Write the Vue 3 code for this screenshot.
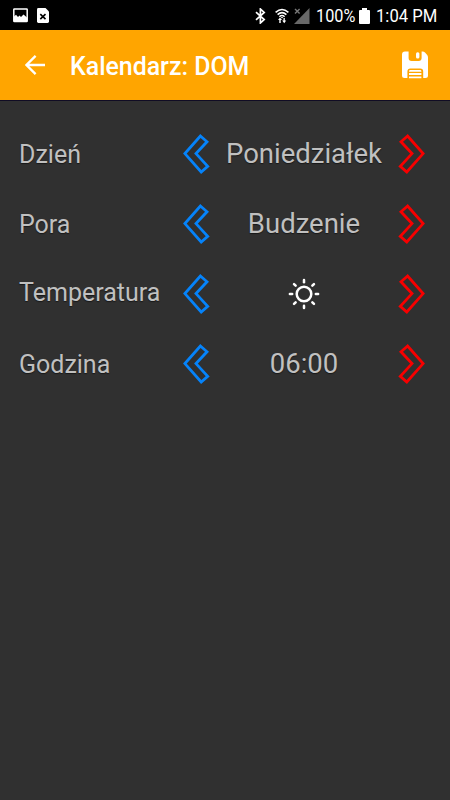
<script setup>
const rows = [
  { key: 'day', label: 'Dzień', value: 'Poniedziałek' },
  { key: 'period', label: 'Pora', value: 'Budzenie' },
  { key: 'temperature', label: 'Temperatura', icon: true },
  { key: 'hour', label: 'Godzina', value: '06:00' },
]
const rays = [0, 45, 90, 135, 180, 225, 270, 315]
</script>

<template>
  <div class="screen">
    <header class="status">
      <svg class="s-image" width="16" height="15" viewBox="0 0 16 15">
        <rect x="0.8" y="1" width="13.4" height="12.5" rx="0.6" fill="none" stroke="#fff" stroke-width="1.5" />
        <path d="M1 8.5 L3 6.8 L5 9 L6.5 7.5 L8 9 L10.5 6.5 L14 9.5 V13.5 H1Z" fill="#fff" />
      </svg>
      <svg class="s-file" width="12" height="15" viewBox="0 0 12 15">
        <path d="M1.4 0 H8.5 L12 3.5 V13.6 Q12 15 10.6 15 H1.4 Q0 15 0 13.6 V1.4 Q0 0 1.4 0Z" fill="#fff" />
        <path d="M3.3 6.2 L8.5 11.2 M8.5 6.2 L3.3 11.2" stroke="#000" stroke-width="1.6" />
      </svg>
      <span class="spacer"></span>
      <svg class="s-bt" width="11" height="16" viewBox="0 0 11 16">
        <path d="M1 4.2 L9.2 11.6 L5.4 15 V1 L9.2 4.4 L1 11.8" fill="none" stroke="#fff" stroke-width="1.7" />
      </svg>
      <svg class="s-wifi" width="14" height="16" viewBox="0 0 14 16">
        <g fill="none" stroke="#fff" stroke-width="1.5">
          <path d="M0.6 4.4 Q7 -1.4 13.4 4.4" />
          <path d="M2.6 6.6 Q7 2.6 11.4 6.6" />
          <path d="M4.4 8.7 Q7 6.3 9.6 8.7" />
        </g>
        <path d="M5.7 9 H8.3 L7 10.5Z M3 12 L5 9.6 L7 12 H5.7 V15 H4.3 V12Z M7.2 12.6 H8.5 V10 H9.8 V12.6 H11.2 L9.2 15.2Z" fill="#fff" />
      </svg>
      <svg class="s-signal" width="16" height="16" viewBox="0 0 16 16">
        <path d="M15.5 0 V16 H0Z" fill="#686868" />
        <path d="M1 1 L5.6 5.6 M5.6 1 L1 5.6" stroke="#777" stroke-width="1.4" />
      </svg>
      <span class="percent">100%</span>
      <svg class="s-battery" width="11" height="16" viewBox="0 0 11 16">
        <path d="M3 0 H8 V2 H10 Q11 2 11 3 V15 Q11 16 10 16 H1 Q0 16 0 15 V3 Q0 2 1 2 H3Z" fill="#fff" />
      </svg>
      <span class="time">1:04 PM</span>
    </header>

    <nav class="toolbar">
      <svg class="back" width="20" height="20" viewBox="0 0 20 20">
        <path d="M20 10 H1.6 M10.6 0.9 L1.5 10 L10.6 19.1" fill="none" stroke="#fff" stroke-width="2.3" />
      </svg>
      <h1>Kalendarz: DOM</h1>
      <svg class="save" width="26" height="28" viewBox="0 0 26 28">
        <path d="M3 0.5 H6.6 V7 Q6.6 10 9.6 10 H16.6 Q19.6 10 19.6 7 V0.5 H20.6 Q22 0.5 23 1.6 L25 3.8 Q26 5 26 6.5 V24.5 Q26 27 23.4 27 H21.2 V20.5 Q21.2 17.6 18.2 17.6 H8.4 Q5.4 17.6 5.4 20.5 V27 H2.6 Q0 27 0 24.5 V3.5 Q0 0.5 3 0.5Z" fill="#fff" />
        <rect x="14" y="1.2" width="3.4" height="6.3" rx="1.5" fill="#fff" />
        <path d="M7 20.4 Q7 19 8.3 19 H18 Q19.4 19 19.4 20.4 V20.8 H7Z M7 22.1 H19.4 V24.1 H7Z M7 25.4 H19.4 V27.3 H7Z" fill="#fff" />
      </svg>
    </nav>

    <main class="settings">
      <div v-for="row in rows" :key="row.key" class="row">
        <span class="label" :class="row.key">{{ row.label }}</span>
        <svg class="chevron previous" width="28" height="42" viewBox="0 0 28 42">
          <path d="M18.4 3 L25 8.8 L14 20.6 L25.7 33.3 L19.2 39 L2.9 20.6Z" />
        </svg>
        <span class="value" :class="row.key">
          <svg v-if="row.icon" width="32" height="32" viewBox="-16 -16 32 32">
            <g fill="none" stroke="#fff">
              <circle r="7.3" stroke-width="2.5" />
              <path v-for="angle in rays" :key="angle" d="M0 -11.8 V-14.1" :transform="`rotate(${angle})`" stroke-width="2.5" stroke-linecap="round" />
            </g>
          </svg>
          <template v-else>{{ row.value }}</template>
        </span>
        <svg class="chevron next" width="28" height="42" viewBox="0 0 28 42">
          <path d="M9.6 3 L3 8.8 L14 20.6 L2.3 33.3 L8.8 39 L25.1 20.6Z" />
        </svg>
      </div>
    </main>
  </div>
</template>

<style>
body {
  margin: 0;
  background: #303030;
}
</style>

<style scoped>
.screen {
  width: 450px;
  height: 800px;
  overflow: hidden;
  background: #303030;
  font-family: Roboto, "Noto Sans", sans-serif;
}
svg {
  display: block;
  flex: none;
}
.status {
  display: flex;
  height: 30px;
  box-sizing: border-box;
  padding: 1px 14px 0 13px;
  align-items: center;
  background: #000;
  color: #fff;
  font-size: 19px;
  line-height: 30px;
  white-space: nowrap;
}
.s-file { margin-left: 8px; }
.spacer { flex: 1; }
.s-wifi { margin-left: 9px; }
.s-signal { margin-left: 5px; }
.percent,
.time {
  font-size: 18.5px;
  transform-origin: left center;
}
.percent {
  width: 39px;
  margin-left: 6px;
  transform: scaleX(0.88);
}
.s-battery { margin-left: 4px; }
.time {
  width: 60px;
  margin-left: 6px;
  transform: scaleX(0.9);
}
.toolbar {
  display: flex;
  height: 71px;
  box-sizing: border-box;
  padding: 0 22px 0 25px;
  align-items: center;
  background: #ffa500;
  border-bottom: 1px solid #100c24;
}
h1 {
  margin: 3px 0 0 25px;
  color: #fff;
  font-size: 24.9px;
  font-weight: 500;
  line-height: 30px;
  white-space: nowrap;
}
.save { margin-left: auto; }
.settings {
  padding: 18px 24px 0 19px;
}
.row {
  display: grid;
  height: 70px;
  grid-template-columns: 163px 28px 188px 28px;
  align-items: center;
}
.label,
.value {
  color: #c0c0c0;
  text-shadow: 0 1px 1px #181818;
  white-space: nowrap;
}
.label {
  padding-top: 2px;
  font-size: 25px;
  line-height: 30px;
}
.label.temperature {
  padding: 0 0 3px;
}
.value {
  display: flex;
  justify-content: center;
  font-size: 27.5px;
  line-height: 34px;
}
.chevron path {
  fill: none;
  stroke: #0583fa;
  stroke-width: 2.8;
}
.next path { stroke: #f80000; }
</style>
